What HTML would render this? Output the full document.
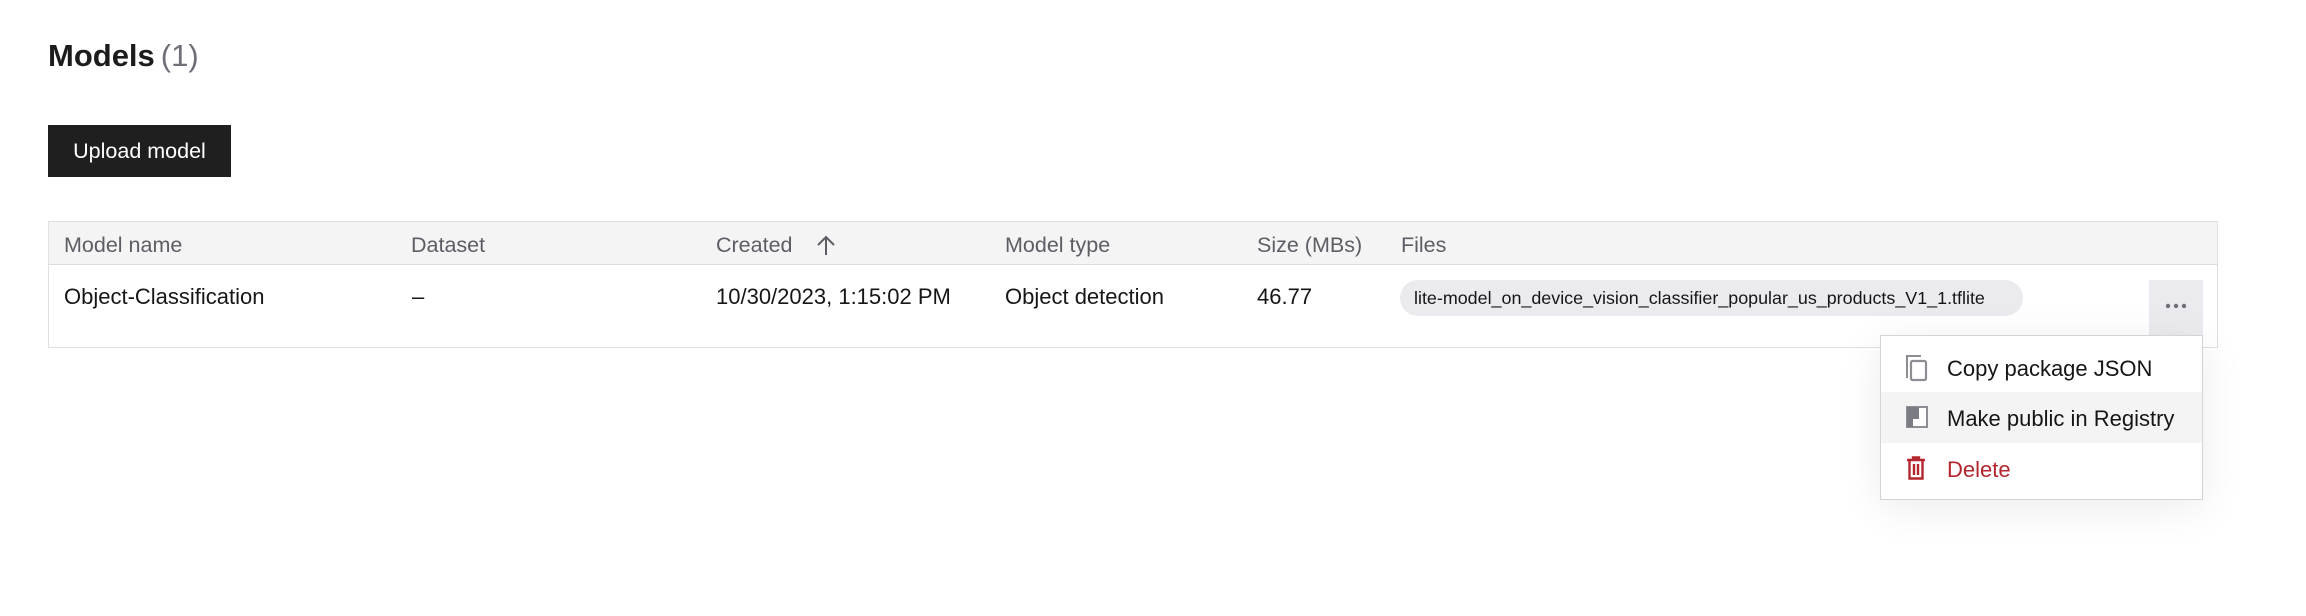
<!DOCTYPE html>
<html><head><style>
*{margin:0;padding:0;box-sizing:border-box}
body{width:2306px;height:616px;background:#fff;font-family:"Liberation Sans",sans-serif;position:relative;overflow:hidden;color:#161616}
.a{position:absolute;white-space:nowrap}
.h{font-size:21.5px;color:#5d5d66;top:233px}
.r{font-size:22px;color:#161616;top:284px}
</style></head><body>
<div class="a" style="left:48px;top:38px;font-size:31px;font-weight:bold;color:#1c1c1c">Models<span style="font-weight:normal;color:#6f6f78;margin-left:6px">(1)</span></div>
<div class="a" style="left:48px;top:125px;width:183px;height:52px;background:#1f1f1f;color:#fff;font-size:21.5px;line-height:52px;text-align:center">Upload model</div>

<div class="a" style="left:48px;top:221px;width:2170px;height:127px;border:1.5px solid #e0e0e0"></div>
<div class="a" style="left:49px;top:222px;width:2168px;height:43px;background:#f4f4f4;border-bottom:1.5px solid #dcdcdc"></div>
<div class="a h" style="left:64px">Model name</div>
<div class="a h" style="left:411px">Dataset</div>
<div class="a h" style="left:716px">Created</div>
<svg class="a" style="left:816px;top:234px" width="20" height="22" viewBox="0 0 20 22"><path d="M10 3V21M2 11L10 3L18 11" stroke="#5d5d66" stroke-width="2" fill="none"/></svg>
<div class="a h" style="left:1005px">Model type</div>
<div class="a h" style="left:1257px">Size (MBs)</div>
<div class="a h" style="left:1401px">Files</div>

<div class="a r" style="left:64px">Object-Classification</div>
<div class="a r" style="left:412px">–</div>
<div class="a r" style="left:716px">10/30/2023, 1:15:02 PM</div>
<div class="a r" style="left:1005px">Object detection</div>
<div class="a r" style="left:1257px">46.77</div>
<div class="a" style="left:1400px;top:280px;width:623px;height:36px;border-radius:18px;background:#ebebef;font-size:17.9px;line-height:36px;padding-left:14px;color:#161616">lite-model_on_device_vision_classifier_popular_us_products_V1_1.tflite</div>

<div class="a" style="left:2149px;top:280px;width:54px;height:56px;background:#ebebef"></div>
<svg class="a" style="left:2165px;top:302px" width="22" height="8"><circle cx="3" cy="4" r="2.2" fill="#6f6f78"/><circle cx="11" cy="4" r="2.2" fill="#6f6f78"/><circle cx="19" cy="4" r="2.2" fill="#6f6f78"/></svg>

<div class="a" style="left:1880px;top:335px;width:323px;height:165px;background:#fff;border:1.5px solid #d4d4d8;box-shadow:0 8px 40px rgba(0,0,0,0.08)">
<div style="position:absolute;left:0;top:56px;width:100%;height:51px;background:#f4f4f4"></div>
</div>
<svg class="a" style="left:1905px;top:354px" width="24" height="28" viewBox="0 0 24 28"><path d="M2 24V2H16" stroke="#8d8d94" stroke-width="2" fill="none"/><rect x="6" y="7" width="15" height="19" rx="1.5" stroke="#8d8d94" stroke-width="2.2" fill="none"/></svg>
<div class="a" style="left:1947px;top:356px;font-size:22px">Copy package JSON</div>
<svg class="a" style="left:1906px;top:406px" width="22" height="22" viewBox="0 0 22 22"><rect x="1" y="1" width="20" height="20" fill="#fff" stroke="#8d8d94" stroke-width="2"/><path d="M1 1H13V13H7V21H1Z" fill="#7b7b83"/></svg>
<div class="a" style="left:1947px;top:406px;font-size:22px">Make public in Registry</div>
<svg class="a" style="left:1906px;top:456px" width="20" height="24" viewBox="0 0 20 24"><path d="M1 4H19M7 4V1.5H13V4M3.5 4V22.5H16.5V4M8 8V19M12 8V19" stroke="#b3262e" stroke-width="2.4" fill="none"/></svg>
<div class="a" style="left:1947px;top:457px;font-size:22px;color:#b3262e">Delete</div>
</body></html>
